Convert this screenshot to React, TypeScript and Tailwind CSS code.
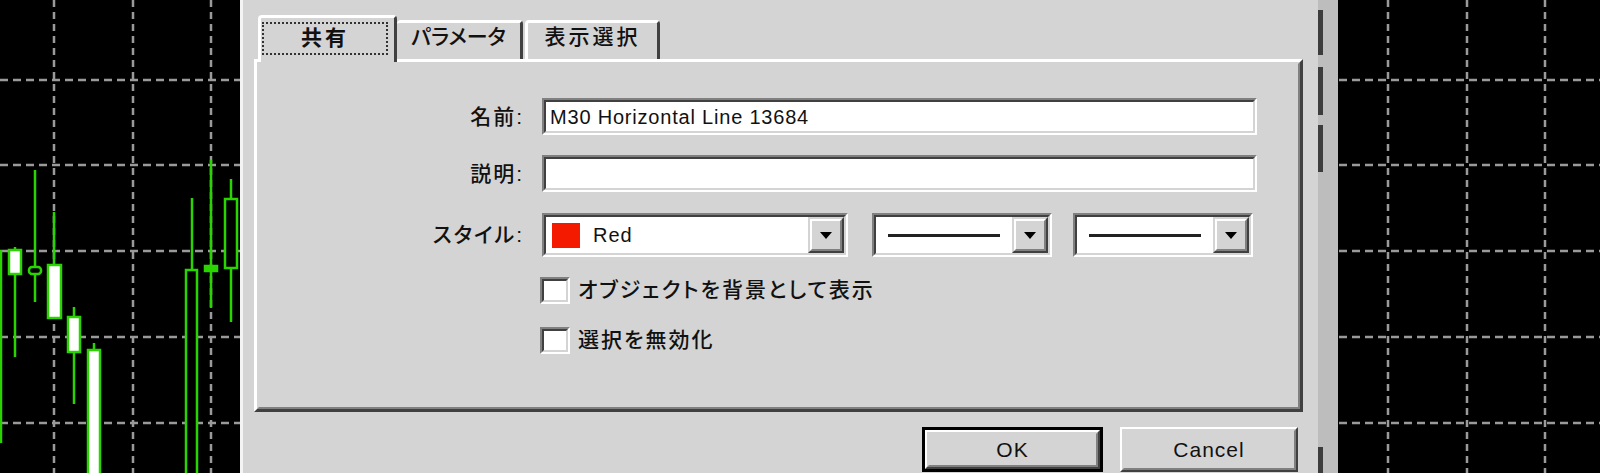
import React from "react";

const GREEN = "#2ad400";

function Chart() {
  const vLines = [54, 133, 211, 1388, 1467, 1545];
  const hLines = [80, 165, 251, 337, 423];
  const wicks: [number, number, number][] = [
    [1, 250, 443],
    [15, 247, 357],
    [35, 170, 302],
    [54, 212, 318],
    [74, 307, 404],
    [94, 343, 473],
    [192, 198, 473],
    [211, 160, 308],
    [231, 179, 322],
  ];
  const bodies = [
    { x: 9, y: 250, w: 12, h: 24, fill: "#ffffff", r: 0 },
    { x: 29, y: 267, w: 12, h: 7, fill: "#000000", r: 3 },
    { x: 48, y: 265, w: 13, h: 53, fill: "#ffffff", r: 0 },
    { x: 68, y: 317, w: 12, h: 35, fill: "#ffffff", r: 0 },
    { x: 88, y: 350, w: 12, h: 140, fill: "#ffffff", r: 0 },
    { x: 186, y: 270, w: 11, h: 220, fill: "#000000", r: 0 },
    { x: 205, y: 266, w: 12, h: 5, fill: GREEN, r: 0 },
    { x: 225, y: 199, w: 12, h: 69, fill: "#000000", r: 0 },
  ];
  return (
    <svg className="pointer-events-none absolute inset-0" width="1600" height="473" viewBox="0 0 1600 473">
      <rect width="1600" height="473" fill="#000" />
      {hLines.map((y) => (
        <line key={"h" + y} x1="0" x2="1600" y1={y} y2={y} stroke="#9a9a9a" strokeWidth="2.5" strokeDasharray="8 5" />
      ))}
      {vLines.map((x) => (
        <line key={"v" + x} x1={x} x2={x} y1="0" y2="473" stroke="#9a9a9a" strokeWidth="2.5" strokeDasharray="7 5" />
      ))}
      {wicks.map(([x, y1, y2]) => (
        <line key={"w" + x} x1={x} x2={x} y1={y1} y2={y2} stroke={GREEN} strokeWidth="2.5" />
      ))}
      {bodies.map((b) => (
        <rect key={"b" + b.x} x={b.x} y={b.y} width={b.w} height={b.h} rx={b.r} fill={b.fill} stroke={GREEN} strokeWidth="2.5" />
      ))}
    </svg>
  );
}

function Sunken({ className = "", children }: { className?: string; children?: React.ReactNode }) {
  return (
    <div className={`border-2 border-t-[#808080] border-l-[#808080] border-b-white border-r-white ${className}`}>
      <div className="flex h-full items-center border-2 border-t-[#404040] border-l-[#404040] border-b-[#d4d4d4] border-r-[#d4d4d4] bg-white">
        {children}
      </div>
    </div>
  );
}

function DropButton() {
  return (
    <div className="ml-auto flex h-full w-[36px] border-2 border-t-[#d4d4d4] border-l-[#d4d4d4] border-b-[#404040] border-r-[#404040]">
      <div className="flex flex-1 items-center justify-center border-2 border-t-white border-l-white border-b-[#808080] border-r-[#808080] bg-[#d4d4d4]">
        <svg width="12" height="7" viewBox="0 0 12 7">
          <polygon points="0,0 12,0 6,7" fill="#000" />
        </svg>
      </div>
    </div>
  );
}

function LineCombo({ className = "" }: { className?: string }) {
  return (
    <Sunken className={`h-[44px] w-[180px] ${className}`}>
      <div className="ml-[12px] h-[3px] w-[112px] bg-[#222]" />
      <DropButton />
    </Sunken>
  );
}

function Checkbox({ label }: { label: string }) {
  return (
    <div className="flex h-[26px] items-center pl-[281px]">
      <div className="h-[27px] w-[30px] border-2 border-t-[#808080] border-l-[#808080] border-b-white border-r-white">
        <div className="h-full border-2 border-t-[#404040] border-l-[#404040] border-b-[#d4d4d4] border-r-[#d4d4d4] bg-white" />
      </div>
      <span className="ml-[8px] text-[21px] font-medium tracking-[2px] text-[#111] [font-feature-settings:'palt']">{label}</span>
    </div>
  );
}

function Label({ children }: { children: React.ReactNode }) {
  return (
    <div className="w-[266px] pr-[1px] text-right text-[21px] font-medium tracking-[2px] text-[#111] [font-feature-settings:'palt']">
      {children}
    </div>
  );
}

function Raised({ className = "", children, isDefault = false }: { className?: string; children?: React.ReactNode; isDefault?: boolean }) {
  const inner = (
    <div className="flex h-full border-2 border-t-white border-l-white border-b-[#404040] border-r-[#404040]">
      <div className="flex flex-1 items-center justify-center border-2 border-t-[#d4d4d4] border-l-[#d4d4d4] border-b-[#808080] border-r-[#808080] text-[21px] tracking-[1px] text-[#111]">
        {children}
      </div>
    </div>
  );
  return isDefault ? (
    <div className={`border-[3px] border-black ${className}`}>{inner}</div>
  ) : (
    <div className={className}>{inner}</div>
  );
}

function Tabs() {
  return (
    <div className="flex h-[44px] items-end pl-[4px]">
      <div className="relative z-10 -mb-[3px] flex h-[47px] w-[139px] rounded-t-[4px] border-t-[3px] border-l-[3px] border-r-[3px] border-t-white border-l-white border-r-[#404040] bg-[#d4d4d4] pl-[1px] pt-[4px]">
        <div className="flex h-[33px] w-[126px] items-center justify-center border-2 border-dotted border-[#333] pb-[1px] text-[21px] font-bold tracking-[3px] text-[#111]">
          共有
        </div>
      </div>
      <div className="flex h-[39px] w-[126px] items-center justify-center rounded-t-[4px] border-t-[3px] border-r-[3px] border-t-white border-r-[#404040] pb-[8px] text-[21px] font-medium tracking-[0px] text-[#111] [font-feature-settings:'palt']">
        パラメータ
      </div>
      <div className="ml-[2px] flex h-[39px] w-[135px] items-center justify-center rounded-t-[4px] border-t-[3px] border-l-[3px] border-r-[3px] border-t-white border-l-white border-r-[#404040] pb-[8px] text-[21px] font-medium tracking-[3px] text-[#111]">
        表示選択
      </div>
    </div>
  );
}

function FrameStrip() {
  return (
    <div className="flex h-full w-[20px]">
      <div className="flex w-[5px] flex-col bg-[#bdbdbd]">
        <div className="mt-[10px] h-[45px] bg-[#3c3c3c]" />
        <div className="mt-[12px] h-[48px] bg-[#3c3c3c]" />
        <div className="mt-[10px] h-[47px] bg-[#3c3c3c]" />
        <div className="mt-[275px] flex-1 bg-[#3c3c3c]" />
      </div>
      <div className="flex-1 bg-[#bdbdbd]" />
    </div>
  );
}

export default function App() {
  return (
    <div className="relative h-[473px] w-[1600px] overflow-hidden bg-black font-['Liberation_Sans','Noto_Sans_CJK_JP',sans-serif]">
      <Chart />
      <div className="relative flex h-full pl-[240px]">
        <div className="flex h-full w-[1098px] bg-[#d4d4d4]">
          <div className="flex-1 border-l-[3px] border-l-[#f4f4f4] pl-[11px] pr-[15px] pt-[15px]">
            <Tabs />
            <div className="h-[353px] border-[3px] border-t-white border-l-white border-b-[#404040] border-r-[#404040]">
              <div className="h-full border-2 border-t-[#d4d4d4] border-l-[#d4d4d4] border-b-[#808080] border-r-[#808080] pt-[34px]">
                <div className="flex h-[37px] items-center">
                  <Label>名前:</Label>
                  <Sunken className="ml-[17px] h-[37px] w-[715px]">
                    <span className="pl-[4px] text-[20px] tracking-[0.8px] text-[#111]">M30 Horizontal Line 13684</span>
                  </Sunken>
                </div>
                <div className="mt-[20px] flex h-[37px] items-center">
                  <Label>説明:</Label>
                  <Sunken className="ml-[17px] h-[37px] w-[715px]" />
                </div>
                <div className="mt-[21px] flex h-[44px] items-center">
                  <Label>スタイル:</Label>
                  <Sunken className="ml-[17px] h-[44px] w-[306px]">
                    <div className="ml-[6px] h-[25px] w-[28px] bg-[#f41a00]" />
                    <span className="ml-[13px] text-[20px] tracking-[1px] text-[#111]">Red</span>
                    <DropButton />
                  </Sunken>
                  <LineCombo className="ml-[24px]" />
                  <LineCombo className="ml-[21px]" />
                </div>
                <div className="mt-[20px]">
                  <Checkbox label="オブジェクトを背景として表示" />
                </div>
                <div className="mt-[24px]">
                  <Checkbox label="選択を無効化" />
                </div>
              </div>
            </div>
            <div className="mt-[15px] flex justify-end pr-[5px]">
              <Raised isDefault className="h-[45px] w-[181px]">OK</Raised>
              <Raised className="ml-[17px] h-[45px] w-[178px]">Cancel</Raised>
            </div>
          </div>
          <FrameStrip />
        </div>
      </div>
    </div>
  );
}
